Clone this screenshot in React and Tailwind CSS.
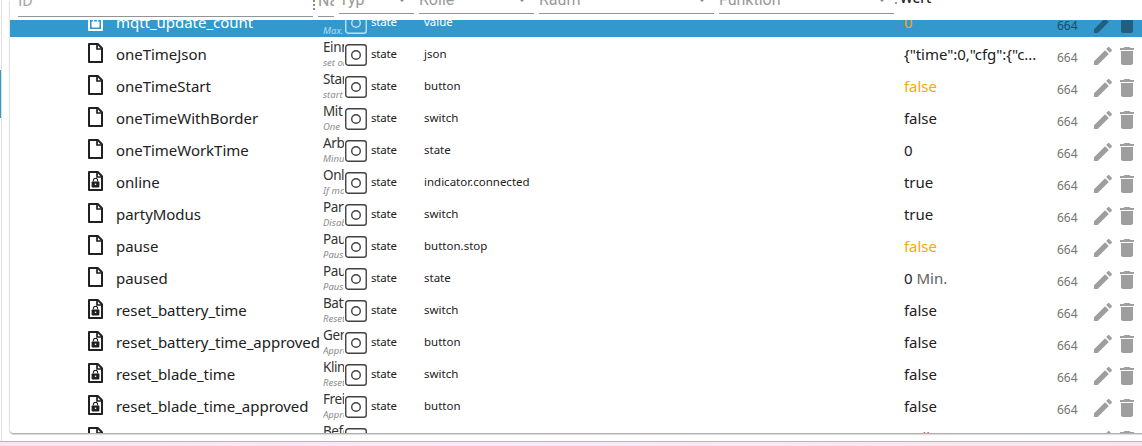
import React from 'react';

const rows = [
  { id: 'mqtt_update_count', name: 'Max', desc: 'Max. ', role: 'value', value: '0', lock: true, tone: 'ack', selected: true },
  { id: 'oneTimeJson', name: 'Einm', desc: 'set one', role: 'json', value: '{"time":0,"cfg":{"c...' },
  { id: 'oneTimeStart', name: 'Start', desc: 'start ', role: 'button', value: 'false', tone: 'ack' },
  { id: 'oneTimeWithBorder', name: 'Mit', desc: 'One ', role: 'switch', value: 'false' },
  { id: 'oneTimeWorkTime', name: 'Arb', desc: 'Minu', role: 'state', value: '0' },
  { id: 'online', name: 'Onli', desc: 'If mo', role: 'indicator.connected', value: 'true', lock: true },
  { id: 'partyModus', name: 'Part', desc: 'Disab', role: 'switch', value: 'true' },
  { id: 'pause', name: 'Paus', desc: 'Paus', role: 'button.stop', value: 'false', tone: 'ack' },
  { id: 'paused', name: 'Paus', desc: 'Paus', role: 'state', value: '0', unit: 'Min.' },
  { id: 'reset_battery_time', name: 'Batt', desc: 'Reset', role: 'switch', value: 'false', lock: true },
  { id: 'reset_battery_time_approved', name: 'Gen', desc: 'Appro', role: 'button', value: 'false', lock: true },
  { id: 'reset_blade_time', name: 'Kling', desc: 'Reset', role: 'switch', value: 'false', lock: true },
  { id: 'reset_blade_time_approved', name: 'Freig', desc: 'Appro', role: 'button', value: 'false', lock: true },
  { id: 'sendCommand', name: 'Befe', desc: 'Send', role: 'text', value: 'null', tone: 'error' },
];

function FileIcon({ lock }) {
  return (
    <svg width="15" height="20" viewBox="0 0 15 20" fill="none" className="shrink-0">
      <path d="M1 1H9.8L14 5.2V19H1Z" stroke="currentColor" strokeWidth="2" strokeLinejoin="round" />
      <path d="M9 1V6H14" stroke="currentColor" strokeWidth="1.7" />
      {lock && (
        <g>
          <rect x="3.6" y="10.4" width="7.8" height="6" rx="0.8" fill="currentColor" />
          <path d="M5.4 10.6V9.3a2.1 2.1 0 0 1 4.2 0V10.6" stroke="currentColor" strokeWidth="1.1" />
          <circle cx="7.5" cy="13.3" r="0.8" className="fill-white" />
        </g>
      )}
    </svg>
  );
}

function StateIcon() {
  return (
    <svg width="22" height="22" viewBox="0 0 22 22" fill="none" stroke="currentColor" className="shrink-0">
      <rect x="0.75" y="0.75" width="20.5" height="20.5" rx="2.6" strokeWidth="1.4" />
      <circle cx="11" cy="11" r="4.3" strokeWidth="1.4" />
    </svg>
  );
}

function EditIcon() {
  return (
    <svg width="24" height="24" viewBox="0 0 24 24" fill="currentColor" className="shrink-0">
      <path d="M3 17.25V21h3.75L17.81 9.94l-3.75-3.75L3 17.25zM20.71 7.04c.39-.39.39-1.02 0-1.41l-2.34-2.34c-.39-.39-1.02-.39-1.41 0l-1.83 1.83 3.75 3.75 1.83-1.83z" />
    </svg>
  );
}

function DeleteIcon() {
  return (
    <svg width="24" height="24" viewBox="0 0 24 24" fill="currentColor" className="shrink-0">
      <path d="M6 19c0 1.1.9 2 2 2h8c1.1 0 2-.9 2-2V7H6v12zM19 4h-3.5l-1-1h-5l-1 1H5v2h14V4z" />
    </svg>
  );
}

function Row({ row }) {
  const tone = row.tone === 'ack' ? 'pt-[5px] text-[#ffa500]' : row.tone === 'error' ? 'pt-1 text-[#ff3b3b]' : 'pt-[5px]';
  return (
    <div className={`flex h-8 w-[1132px] shrink-0 overflow-hidden whitespace-nowrap ${row.selected ? 'bg-[#3399cc] text-white' : 'bg-white text-[#212121]'}`}>
      <div className="flex w-[313px] shrink-0 pl-[78px] pt-1.5">
        <FileIcon lock={row.lock} />
        <span className="-mt-px ml-[13px] text-[15px] leading-6 tracking-[-0.03px]">{row.id}</span>
      </div>
      <div className="flex w-[21px] shrink-0 flex-col overflow-hidden">
        <span className={`text-[13.5px] leading-5 tracking-[-0.4px] ${row.selected ? '' : 'text-[#333]'}`}>{row.name}</span>
        <span className={`text-[9.5px] italic leading-3 ${row.selected ? 'text-[#b5d9ec]' : 'text-[#8c8c8c]'}`}>{row.desc}</span>
      </div>
      <div className={`flex w-[80px] shrink-0 pl-px pt-[7px] ${row.selected ? 'text-[#c2dfef]' : 'text-[#424242]'}`}>
        <StateIcon />
        <span className={`ml-1 text-[11.5px] leading-5 tracking-[-0.2px] ${row.selected ? 'text-white' : 'text-[#212121]'}`}>state</span>
      </div>
      <div className="w-[480px] shrink-0 pt-[7px] text-[11.5px] leading-5">{row.role}</div>
      <div className={`w-[153px] shrink-0 text-[15px] leading-6 tracking-[-0.05px] ${tone}`}>
        {row.value}
        {row.unit && <span className="ml-1 text-[#626262]">{row.unit}</span>}
      </div>
      <div className={`w-[34px] shrink-0 pt-[11px] text-[12px] leading-5 ${row.selected ? 'text-[#194e68]' : 'text-[#747474]'}`}>664</div>
      <div className={`flex shrink-0 pt-[7px] ${row.selected ? 'text-[#215f80]' : 'text-[#9e9e9e]'}`}>
        <EditIcon />
        <DeleteIcon />
      </div>
    </div>
  );
}

function Filter({ label, className }) {
  return (
    <div className={`flex h-3.5 shrink-0 items-end justify-between overflow-hidden border-b border-[#949494] font-[Roboto,sans-serif] text-base text-[#999] ${className}`}>
      <span className="mb-[3px] leading-5">{label}</span>
      <svg width="10" height="5" viewBox="0 0 10 5" className="mb-[11.5px] mr-[7px]">
        <path d="M0 0h10L5 5z" fill="#8b8b8b" />
      </svg>
    </div>
  );
}

export default function App() {
  return (
    <div className="flex h-[446px] w-[1142px] flex-col overflow-hidden bg-white font-['Noto_Sans',sans-serif]">
      <div className="flex h-[441px] shrink-0">
        <div className="flex w-2.5 shrink-0">
          <div className="flex w-px flex-col pt-[70px]">
            <div className="h-12 bg-[#3399cc]" />
          </div>
          <div className="w-px bg-[#dedede]" />
        </div>
        <div className="flex h-[433px] w-[1150px] shrink-0 flex-col overflow-hidden rounded-bl bg-white shadow-[0_1px_0_0_#b0b0b0,0_2px_0_0_#dedede,0_1px_2px_0_#999]">
          <header className="flex h-5 shrink-0 overflow-hidden whitespace-nowrap pl-2">
            <div className="flex h-[17px] w-[295px] shrink-0 items-end overflow-hidden border-b border-[#949494] font-[Roboto,sans-serif] text-base text-[#aaa]">
              <span className="mb-[5px] leading-5">ID</span>
            </div>
            <div className="flex w-[5px] shrink-0 flex-col gap-0.5">
              <i className="h-0.5 w-0.5 bg-[#8c8c8c]" />
              <i className="h-0.5 w-0.5 bg-[#8c8c8c]" />
              <i className="h-0.5 w-0.5 bg-[#8c8c8c]" />
            </div>
            <div className="mr-[5px] flex h-[17px] w-4 shrink-0 items-end overflow-hidden border-b border-[#949494] font-[Roboto,sans-serif] text-base text-[#999]">
              <span className="mb-[5px] leading-5">Name</span>
            </div>
            <Filter label="Typ" className="mr-[5px] w-[75px]" />
            <Filter label="Rolle" className="mr-[5px] w-[115px]" />
            <Filter label="Raum" className="mr-[5px] w-[175px]" />
            <Filter label="Funktion" className="w-[175px]" />
            <div className="ml-px mt-0.5 h-0.5 w-0.5 shrink-0 bg-[#999]" />
            <span className="-mt-[12px] ml-[3px] text-[13.5px] font-medium leading-5 text-[#212121]">Wert</span>
          </header>
          <main className="flex min-h-0 flex-1 flex-col overflow-hidden">
            <div className="-mt-[15px] flex flex-col">
              {rows.map((row) => (
                <Row key={row.id} row={row} />
              ))}
            </div>
          </main>
        </div>
      </div>
      <footer className="h-[5px] shrink-0 border-t border-[#b9b4b8] bg-linear-to-r from-[#fde4f1] via-[#f9eaf5] to-[#fce4ee]" />
    </div>
  );
}
